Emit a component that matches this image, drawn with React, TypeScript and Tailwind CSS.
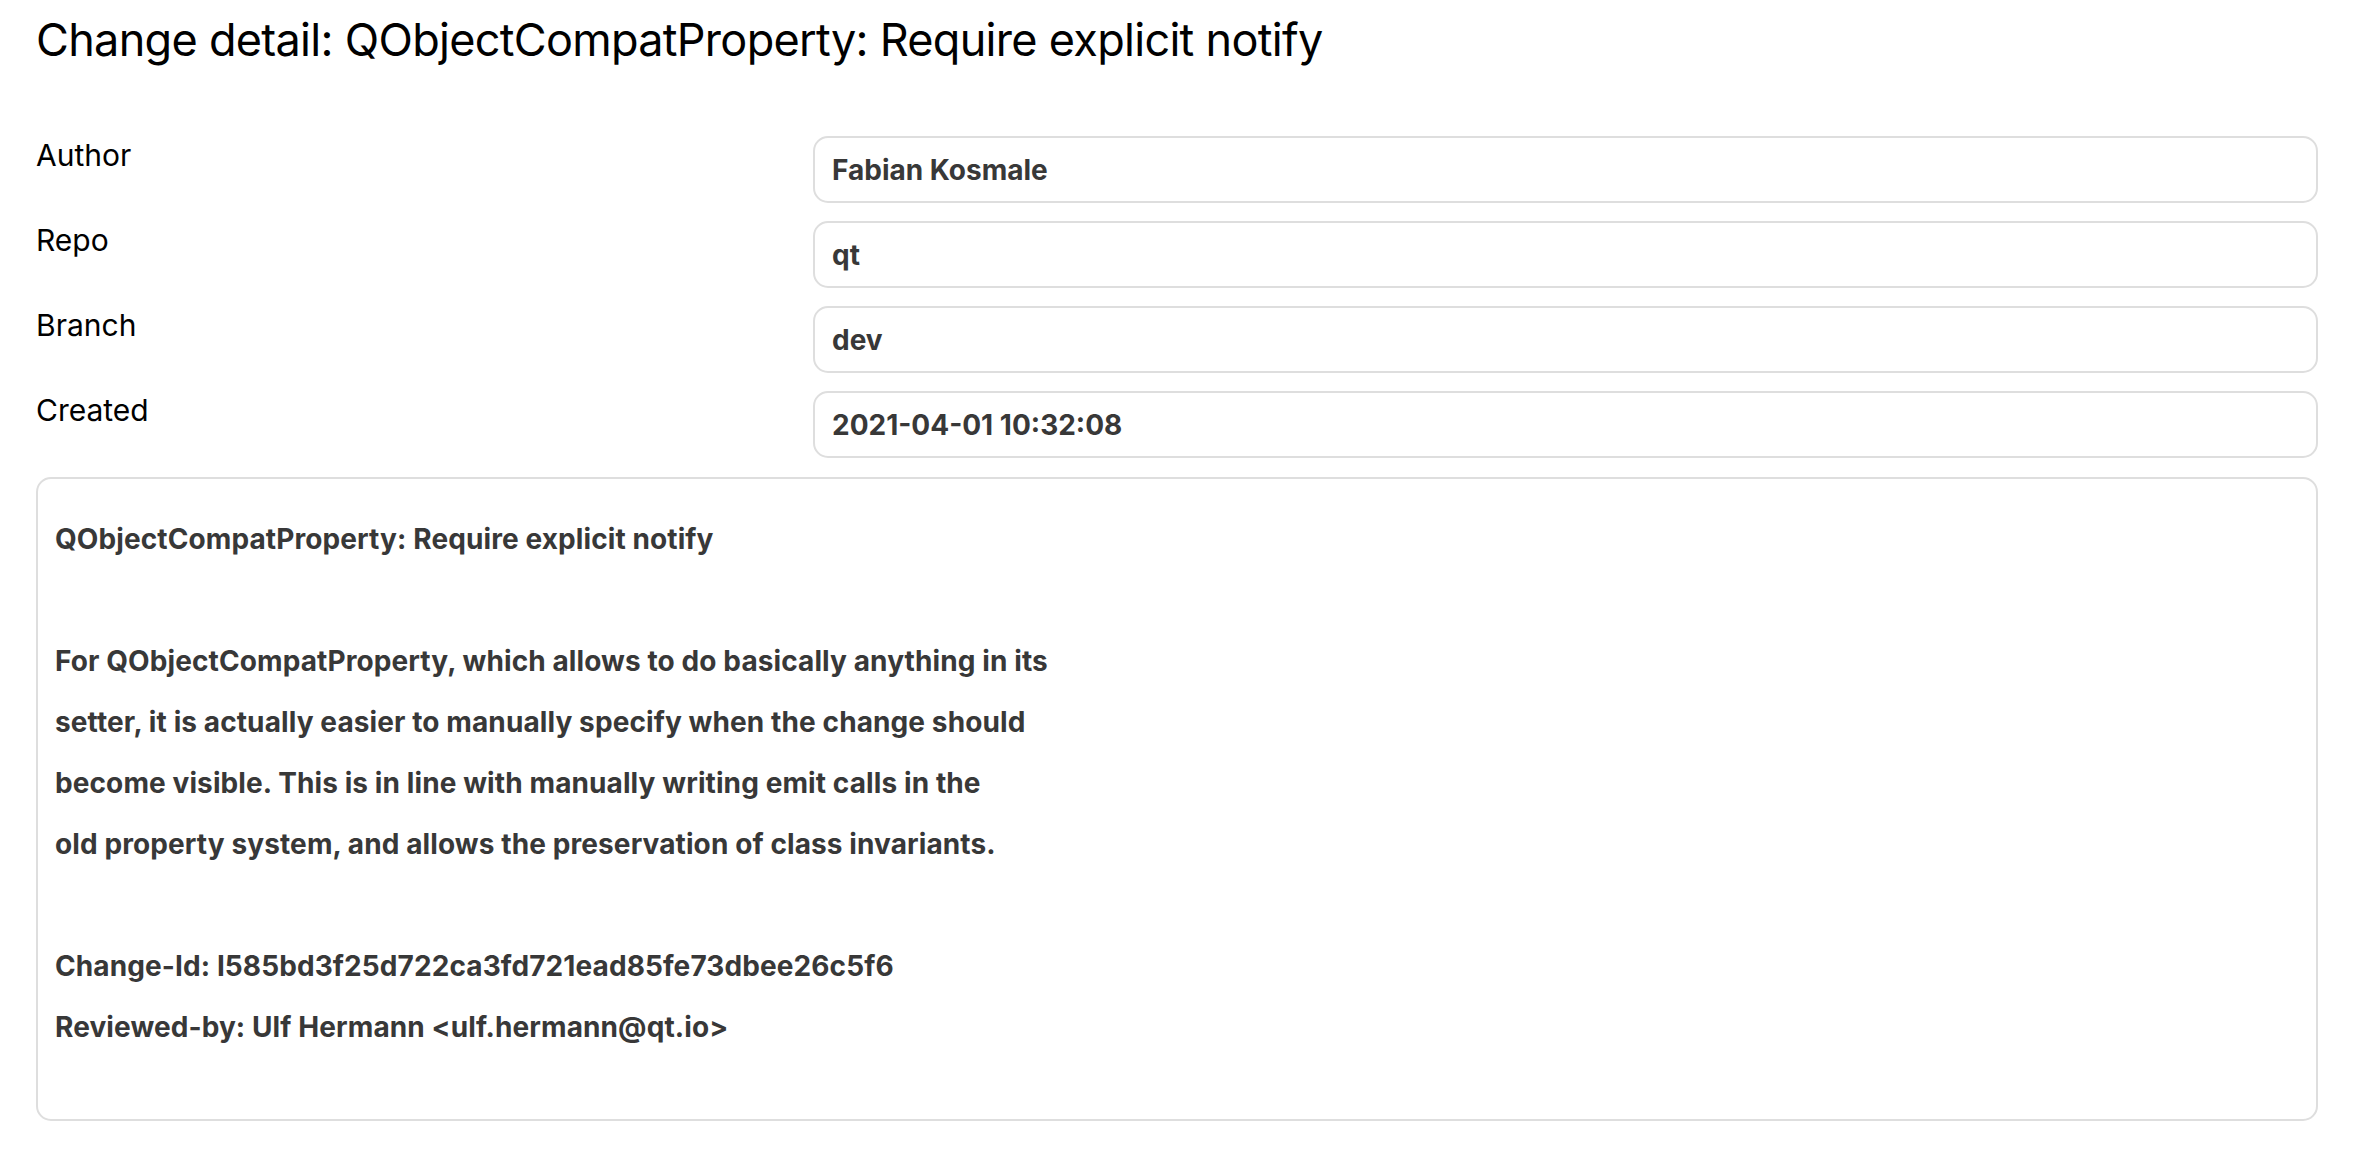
import React from "react";

const fields: [string, string][] = [
  ["Author", "Fabian Kosmale"],
  ["Repo", "qt"],
  ["Branch", "dev"],
  ["Created", "2021-04-01 10:32:08"],
];

const lines: string[] = [
  "QObjectCompatProperty: Require explicit notify",
  "",
  "For QObjectCompatProperty, which allows to do basically anything in its",
  "setter, it is actually easier to manually specify when the change should",
  "become visible. This is in line with manually writing emit calls in the",
  "old property system, and allows the preservation of class invariants.",
  "",
  "Change-Id: I585bd3f25d722ca3fd721ead85fe73dbee26c5f6",
  "Reviewed-by: Ulf Hermann <ulf.hermann@qt.io>",
  "",
];

export default function App() {
  return (
    <div
      className="min-h-screen bg-white px-[36px] pt-[12px] text-black"
      style={{ fontFamily: "Inter, 'Noto Sans', sans-serif" }}
    >
      <h1 className="text-[45px] font-normal leading-[56px] tracking-[-0.7px] text-black">
        Change detail: QObjectCompatProperty: Require explicit notify
      </h1>
      <div className="mt-[68px] flex flex-col gap-[18px]">
        {fields.map(([label, value]) => (
          <div key={label} className="grid grid-cols-[777px_1fr]">
            <div className="text-[30px] leading-[40px] -mt-[1px]">{label}</div>
            <div className="flex h-[67px] items-center rounded-[15px] border-2 border-[#dedede] px-[17px] text-[28px] font-bold text-[#383838]">
              {value}
            </div>
          </div>
        ))}
      </div>
      <div className="mt-[19px] rounded-[15px] border-2 border-[#dedede] px-[17px] pt-[30px] text-[28px] font-bold tracking-[0.1px] text-[#383838]">
        {lines.map((l, i) => (
          <div key={i} className="h-[61px] leading-[61px] whitespace-pre">
            {l}
          </div>
        ))}
      </div>
    </div>
  );
}
